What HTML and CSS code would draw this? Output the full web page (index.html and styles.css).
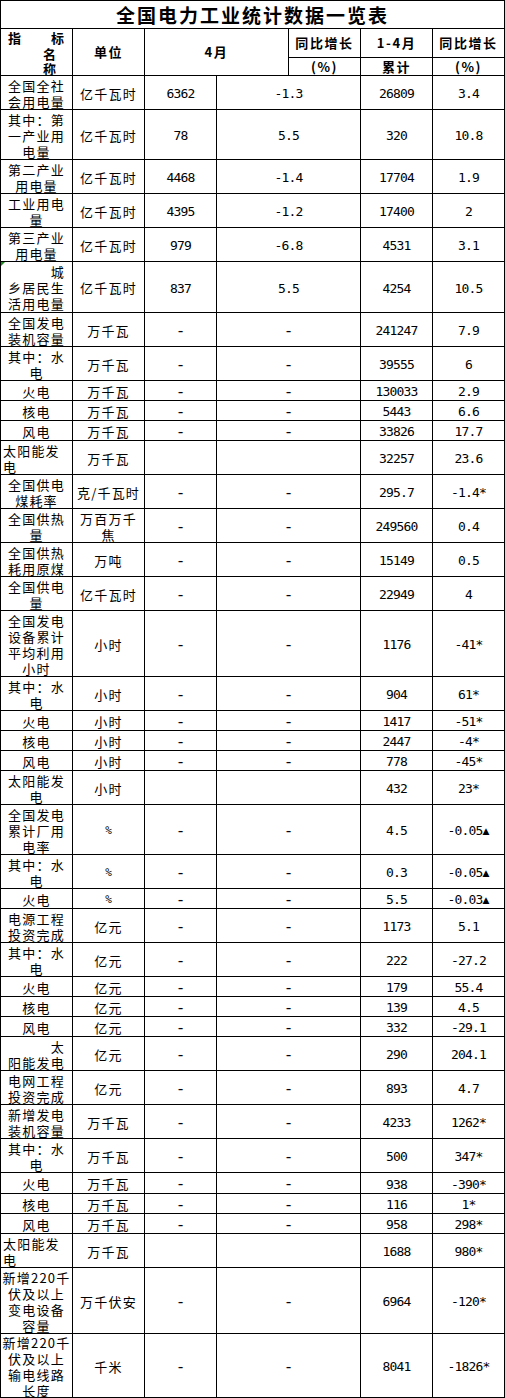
FILE: index.html
```html
<!DOCTYPE html>
<html lang="zh-CN">
<head>
<meta charset="utf-8">
<title>全国电力工业统计数据一览表</title>
<link rel="stylesheet" href="styles.css">
</head>
<body>
<div class="sheet">
  <div class="title">全国电力工业统计数据一览表</div>
  <div class="head">
    <div class="idx">
      <div class="l1"><span>指</span><span>标</span></div>
      <div class="l2">名</div>
      <div class="l2">称</div>
    </div>
    <div class="span2">单位</div>
    <div class="span2 wide">4月</div>
    <div>同比增长</div>
    <div>1-4月</div>
    <div>同比增长</div>
    <div>(%)</div>
    <div>累计</div>
    <div>(%)</div>
  </div>

  <div class="row h34"><div><span>全国全社<br>会用电量</span></div><div>亿千瓦时</div><div class="n">6362</div><div class="n">-1.3</div><div class="n">26809</div><div class="n">3.4</div></div>
  <div class="row h50"><div><span>其中：第<br>一产业用<br>电量</span></div><div>亿千瓦时</div><div class="n">78</div><div class="n">5.5</div><div class="n">320</div><div class="n">10.8</div></div>
  <div class="row h34"><div><span>第二产业<br>用电量</span></div><div>亿千瓦时</div><div class="n">4468</div><div class="n">-1.4</div><div class="n">17704</div><div class="n">1.9</div></div>
  <div class="row h34"><div><span>工业用电<br>量</span></div><div>亿千瓦时</div><div class="n">4395</div><div class="n">-1.2</div><div class="n">17400</div><div class="n">2</div></div>
  <div class="row h34"><div><span>第三产业<br>用电量</span></div><div>亿千瓦时</div><div class="n">979</div><div class="n">-6.8</div><div class="n">4531</div><div class="n">3.1</div></div>
  <div class="row h51"><div class="flag"><span><span class="r">城</span>乡居民生<br>活用电量</span></div><div>亿千瓦时</div><div class="n">837</div><div class="n">5.5</div><div class="n">4254</div><div class="n">10.5</div></div>
  <div class="row h34"><div><span>全国发电<br>装机容量</span></div><div>万千瓦</div><div class="n d">-</div><div class="n d">-</div><div class="n">241247</div><div class="n">7.9</div></div>
  <div class="row h34"><div><span>其中：水<br>电</span></div><div>万千瓦</div><div class="n d">-</div><div class="n d">-</div><div class="n">39555</div><div class="n">6</div></div>
  <div class="row h20"><div>火电</div><div>万千瓦</div><div class="n d">-</div><div class="n d">-</div><div class="n">130033</div><div class="n">2.9</div></div>
  <div class="row h20"><div>核电</div><div>万千瓦</div><div class="n d">-</div><div class="n d">-</div><div class="n">5443</div><div class="n">6.6</div></div>
  <div class="row h20"><div>风电</div><div>万千瓦</div><div class="n d">-</div><div class="n d">-</div><div class="n">33826</div><div class="n">17.7</div></div>
  <div class="row h34"><div class="left"><span>太阳能发<br>电</span></div><div>万千瓦</div><div class="n"></div><div class="n"></div><div class="n">32257</div><div class="n">23.6</div></div>
  <div class="row h34"><div><span>全国供电<br>煤耗率</span></div><div>克/千瓦时</div><div class="n d">-</div><div class="n d">-</div><div class="n">295.7</div><div class="n">-1.4*</div></div>
  <div class="row h34"><div><span>全国供热<br>量</span></div><div><span>万百万千<br>焦</span></div><div class="n d">-</div><div class="n d">-</div><div class="n">249560</div><div class="n">0.4</div></div>
  <div class="row h34"><div><span>全国供热<br>耗用原煤</span></div><div>万吨</div><div class="n d">-</div><div class="n d">-</div><div class="n">15149</div><div class="n">0.5</div></div>
  <div class="row h34"><div><span>全国供电<br>量</span></div><div>亿千瓦时</div><div class="n d">-</div><div class="n d">-</div><div class="n">22949</div><div class="n">4</div></div>
  <div class="row h66"><div><span>全国发电<br>设备累计<br>平均利用<br>小时</span></div><div>小时</div><div class="n d">-</div><div class="n d">-</div><div class="n">1176</div><div class="n">-41*</div></div>
  <div class="row h34"><div><span>其中：水<br>电</span></div><div>小时</div><div class="n d">-</div><div class="n d">-</div><div class="n">904</div><div class="n">61*</div></div>
  <div class="row h20"><div>火电</div><div>小时</div><div class="n d">-</div><div class="n d">-</div><div class="n">1417</div><div class="n">-51*</div></div>
  <div class="row h20"><div>核电</div><div>小时</div><div class="n d">-</div><div class="n d">-</div><div class="n">2447</div><div class="n">-4*</div></div>
  <div class="row h20"><div>风电</div><div>小时</div><div class="n d">-</div><div class="n d">-</div><div class="n">778</div><div class="n">-45*</div></div>
  <div class="row h34"><div><span>太阳能发<br>电</span></div><div>小时</div><div class="n"></div><div class="n"></div><div class="n">432</div><div class="n">23*</div></div>
  <div class="row h50"><div><span>全国发电<br>累计厂用<br>电率</span></div><div class="pct">%</div><div class="n d">-</div><div class="n d">-</div><div class="n">4.5</div><div class="n">-0.05<span class="tri">▲</span></div></div>
  <div class="row h34"><div><span>其中：水<br>电</span></div><div class="pct">%</div><div class="n d">-</div><div class="n d">-</div><div class="n">0.3</div><div class="n">-0.05<span class="tri">▲</span></div></div>
  <div class="row h20"><div>火电</div><div class="pct">%</div><div class="n d">-</div><div class="n d">-</div><div class="n">5.5</div><div class="n">-0.03<span class="tri">▲</span></div></div>
  <div class="row h34"><div><span>电源工程<br>投资完成</span></div><div>亿元</div><div class="n d">-</div><div class="n d">-</div><div class="n">1173</div><div class="n">5.1</div></div>
  <div class="row h34"><div><span>其中：水<br>电</span></div><div>亿元</div><div class="n d">-</div><div class="n d">-</div><div class="n">222</div><div class="n">-27.2</div></div>
  <div class="row h20"><div>火电</div><div>亿元</div><div class="n d">-</div><div class="n d">-</div><div class="n">179</div><div class="n">55.4</div></div>
  <div class="row h20"><div>核电</div><div>亿元</div><div class="n d">-</div><div class="n d">-</div><div class="n">139</div><div class="n">4.5</div></div>
  <div class="row h20"><div>风电</div><div>亿元</div><div class="n d">-</div><div class="n d">-</div><div class="n">332</div><div class="n">-29.1</div></div>
  <div class="row h34"><div><span><span class="r">太</span>阳能发电</span></div><div>亿元</div><div class="n d">-</div><div class="n d">-</div><div class="n">290</div><div class="n">204.1</div></div>
  <div class="row h34"><div><span>电网工程<br>投资完成</span></div><div>亿元</div><div class="n d">-</div><div class="n d">-</div><div class="n">893</div><div class="n">4.7</div></div>
  <div class="row h34"><div><span>新增发电<br>装机容量</span></div><div>万千瓦</div><div class="n d">-</div><div class="n d">-</div><div class="n">4233</div><div class="n">1262*</div></div>
  <div class="row h34"><div><span>其中：水<br>电</span></div><div>万千瓦</div><div class="n d">-</div><div class="n d">-</div><div class="n">500</div><div class="n">347*</div></div>
  <div class="row h21"><div>火电</div><div>万千瓦</div><div class="n d">-</div><div class="n d">-</div><div class="n">938</div><div class="n">-390*</div></div>
  <div class="row h20"><div>核电</div><div>万千瓦</div><div class="n d">-</div><div class="n d">-</div><div class="n">116</div><div class="n">1*</div></div>
  <div class="row h20"><div>风电</div><div>万千瓦</div><div class="n d">-</div><div class="n d">-</div><div class="n">958</div><div class="n">298*</div></div>
  <div class="row h34"><div class="left"><span>太阳能发<br>电</span></div><div>万千瓦</div><div class="n"></div><div class="n"></div><div class="n">1688</div><div class="n">980*</div></div>
  <div class="row h66"><div><span>新增220千<br>伏及以上<br>变电设备<br>容量</span></div><div>万千伏安</div><div class="n d">-</div><div class="n d">-</div><div class="n">6964</div><div class="n">-120*</div></div>
  <div class="row h64"><div><span>新增220千<br>伏及以上<br>输电线路<br>长度</span></div><div>千米</div><div class="n d">-</div><div class="n d">-</div><div class="n">8041</div><div class="n">-1826*</div></div>
</div>
</body>
</html>
```

FILE: styles.css
```css
html, body {
  margin: 0;
  padding: 0;
  background: #fff;
}

.sheet {
  width: 505px;
  box-sizing: border-box;
  border-left: 1px solid #000;
  border-top: 1px solid #000;
  font-family: "Noto Sans CJK SC", "Noto Sans", sans-serif;
  font-size: 13px;
  line-height: 16px;
  color: #000;
}

.title {
  height: 28px;
  box-sizing: border-box;
  border-right: 1px solid #000;
  border-bottom: 1px solid #000;
  display: flex;
  align-items: center;
  justify-content: center;
  font-size: 19px;
  font-weight: bold;
  letter-spacing: 2px;
  padding-top: 1px;
}

.head {
  display: grid;
  grid-template-columns: repeat(7, 72px);
  grid-template-rows: 29px 18px;
  font-weight: bold;
  letter-spacing: 1.6px;
}

.head > div,
.row > div {
  box-sizing: border-box;
  border-right: 1px solid #000;
  border-bottom: 1px solid #000;
  display: flex;
  align-items: center;
  justify-content: center;
  text-align: center;
  white-space: nowrap;
  min-width: 0;
}

.head > .span2 {
  grid-row: 1 / 3;
}

.head > .wide {
  grid-column: 3 / 5;
}

.head > .idx {
  grid-row: 1 / 3;
  display: block;
  line-height: 15.5px;
  letter-spacing: 0;
}

.idx .l1 {
  display: flex;
  justify-content: space-between;
  padding: 1px 8px 0 7px;
}

.idx .l2 {
  padding-left: 42px;
  text-align: left;
}

.row {
  display: grid;
  grid-template-columns: 72px 72px 72px 144px 72px 72px;
  grid-auto-rows: 100%;
  letter-spacing: 1.2px;
}

.row > div {
  padding-top: 2px;
}

.h20 { height: 20px; }
.h21 { height: 21px; }
.h34 { height: 34px; }
.h50 { height: 50px; }
.h51 { height: 51px; }
.h64 { height: 64px; }
.h66 { height: 66px; }

.row > .left {
  justify-content: flex-start;
  text-align: left;
  padding-left: 2px;
}

.r {
  display: block;
  text-align: right;
}

.row > .n,
.row > .pct {
  font-family: "DejaVu Sans Mono", "Liberation Mono", monospace;
  font-size: 13px;
  letter-spacing: -0.8px;
  padding-top: 3px;
}

.row > .d {
  font-size: 16px;
  letter-spacing: 0;
  padding-top: 2px;
}

.row > .pct {
  font-size: 11px;
  letter-spacing: 0;
}

.tri {
  font-family: "DejaVu Sans", sans-serif;
  font-size: 9px;
  vertical-align: 3px;
  letter-spacing: 0;
}

.flag {
  position: relative;
}

.flag::before {
  content: "";
  position: absolute;
  left: 0;
  top: 0;
  border-top: 4px solid #1f8a1f;
  border-right: 4px solid transparent;
}
```
